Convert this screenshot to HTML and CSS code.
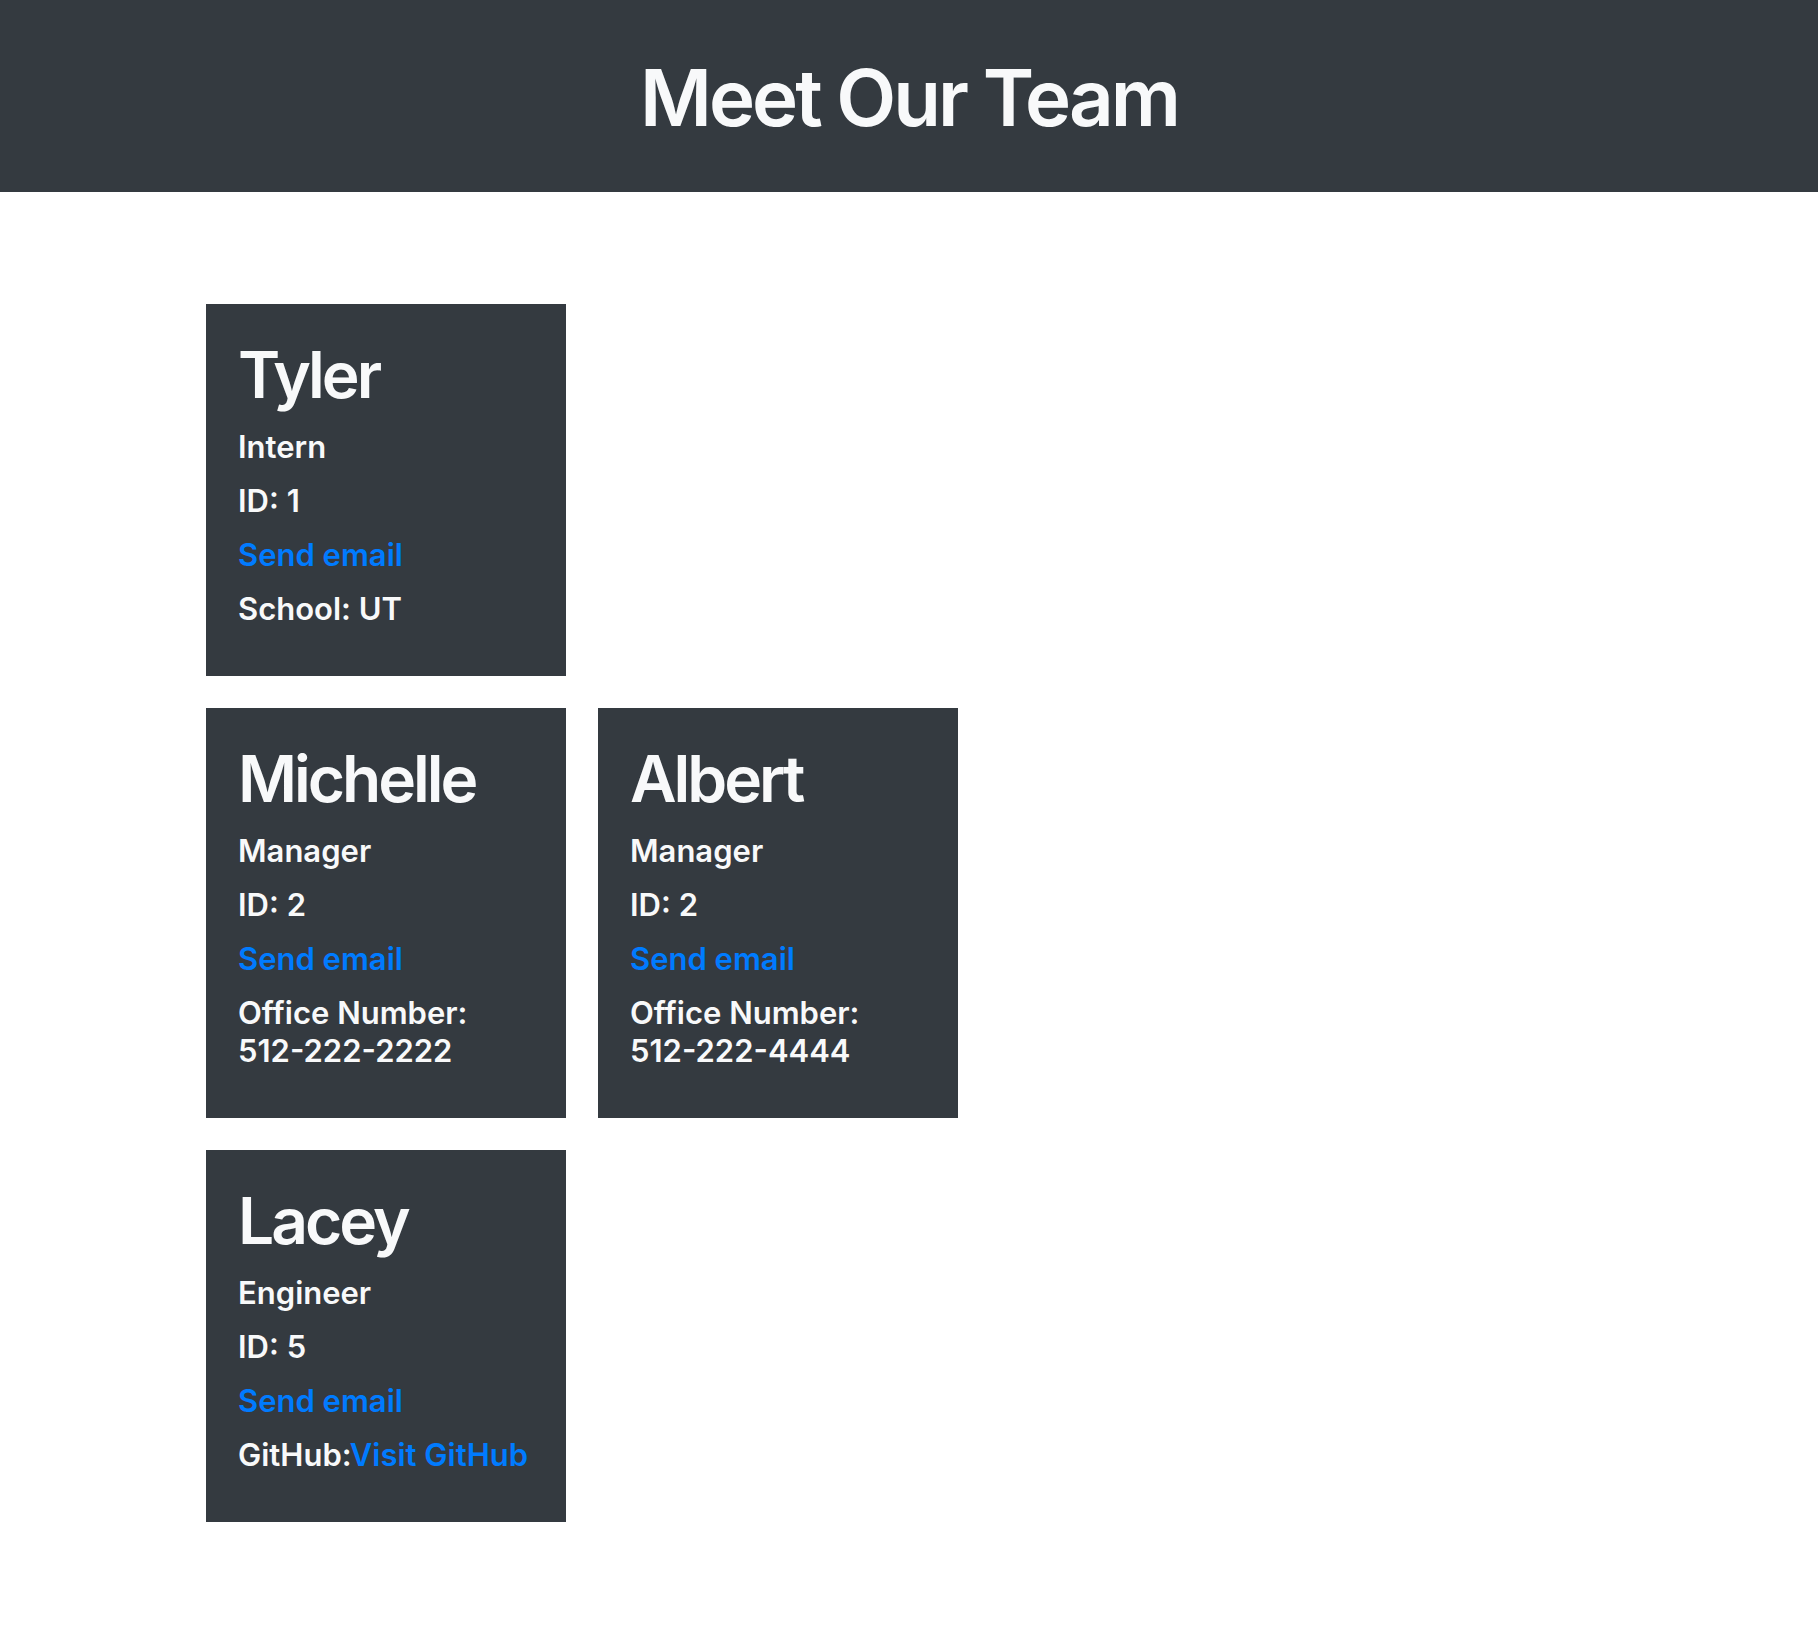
FILE: index.html
```html
<!DOCTYPE html>
<html lang="en">
<head>
<meta charset="utf-8">
<title>Meet Our Team</title>
<link rel="stylesheet" href="styles.css">
</head>
<body>
<header class="site-header">
  <h1 class="site-title">Meet Our Team</h1>
</header>
<main class="team">
  <section class="team-row">
    <article class="card">
      <h2 class="card-name">Tyler</h2>
      <p class="card-line">Intern</p>
      <p class="card-line">ID: 1</p>
      <p class="card-line"><a class="card-link" href="#">Send email</a></p>
      <p class="card-line">School: UT</p>
    </article>
  </section>
  <section class="team-row">
    <article class="card">
      <h2 class="card-name">Michelle</h2>
      <p class="card-line">Manager</p>
      <p class="card-line">ID: 2</p>
      <p class="card-line"><a class="card-link" href="#">Send email</a></p>
      <p class="card-line">Office Number: <span class="phone">512-222-2222</span></p>
    </article>
    <article class="card">
      <h2 class="card-name">Albert</h2>
      <p class="card-line">Manager</p>
      <p class="card-line">ID: 2</p>
      <p class="card-line"><a class="card-link" href="#">Send email</a></p>
      <p class="card-line">Office Number: <span class="phone">512-222-4444</span></p>
    </article>
  </section>
  <section class="team-row">
    <article class="card">
      <h2 class="card-name">Lacey</h2>
      <p class="card-line">Engineer</p>
      <p class="card-line">ID: 5</p>
      <p class="card-line"><a class="card-link" href="#">Send email</a></p>
      <p class="card-line">GitHub:<a class="card-link" href="#">Visit GitHub</a></p>
    </article>
  </section>
</main>
</body>
</html>
```

FILE: styles.css
```css
* {
  box-sizing: border-box;
}

html, body {
  margin: 0;
  padding: 0;
  background: #ffffff;
}

body {
  font-family: Inter, "Liberation Sans", sans-serif;
  color: #f8f9fa;
}

.site-header {
  background: #343a40;
  height: 192px;
  padding-top: 51px;
}

.site-title {
  margin: 0;
  text-align: center;
  font-size: 78px;
  line-height: 94px;
  font-weight: 600;
  color: #f8f9fa;
  letter-spacing: -3px;
}

.team {
  display: flex;
  flex-direction: column;
  gap: 32px;
  padding: 112px 0 0 206px;
}

.team-row {
  display: flex;
  gap: 32px;
}

.card {
  width: 360px;
  background: #343a40;
  padding: 32px 32px 32px;
}

.card-name {
  margin: 0 0 15px;
  font-size: 64px;
  line-height: 77px;
  font-weight: 600;
  color: #f8f9fa;
  letter-spacing: -3px;
}

.card-line {
  margin: 0 0 16px;
  font-size: 31px;
  line-height: 38px;
  font-weight: 600;
  letter-spacing: 0;
}

.phone {
  white-space: nowrap;
}

.card-link {
  color: #007bff;
  text-decoration: none;
}
```
